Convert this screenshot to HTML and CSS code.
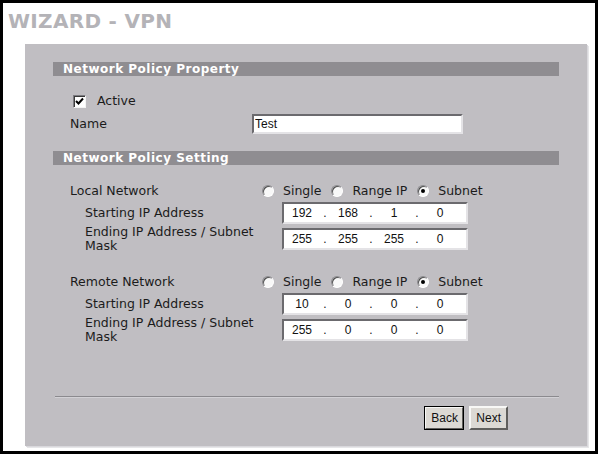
FILE: index.html
```html
<!DOCTYPE html>
<html>

<head>
    <meta charset="UTF-8">
    <title>Wizard - VPN</title>
    <link rel="stylesheet" href="styles.css">
</head>

<body>
    <div class="frame">
        <h1 class="title">WIZARD - VPN</h1>

        <section class="panel">
            <div class="bar">Network Policy Property</div>

            <div class="row active-row">
                <span class="check">
                    <svg width="9" height="9" viewBox="0 0 9 9"><path d="M1 4 L3.5 6.5 L8 1.5" fill="none" stroke="#000" stroke-width="2"/></svg>
                </span>
                <span class="label">Active</span>
            </div>

            <div class="row name-row">
                <span class="label name-label">Name</span>
                <input class="textbox name-box" type="text" value="Test">
            </div>

            <div class="bar bar-second">Network Policy Setting</div>

            <div class="row net-row">
                <span class="label net-label">Local Network</span>
                <span class="radio"></span><span class="label opt">Single</span>
                <span class="radio"></span><span class="label opt">Range IP</span>
                <span class="radio on"></span><span class="label opt">Subnet</span>
            </div>
            <div class="row ip-row">
                <span class="label ip-label">Starting IP Address</span>
                <div class="textbox ipbox">
                    <span class="oct">192</span><span class="dot">.</span><span class="oct">168</span><span class="dot">.</span><span class="oct">1</span><span class="dot">.</span><span class="oct">0</span>
                </div>
            </div>
            <div class="row ip-row">
                <span class="label ip-label">Ending IP Address / Subnet Mask</span>
                <div class="textbox ipbox">
                    <span class="oct">255</span><span class="dot">.</span><span class="oct">255</span><span class="dot">.</span><span class="oct">255</span><span class="dot">.</span><span class="oct">0</span>
                </div>
            </div>

            <div class="row net-row remote">
                <span class="label net-label">Remote Network</span>
                <span class="radio"></span><span class="label opt">Single</span>
                <span class="radio"></span><span class="label opt">Range IP</span>
                <span class="radio on"></span><span class="label opt">Subnet</span>
            </div>
            <div class="row ip-row">
                <span class="label ip-label">Starting IP Address</span>
                <div class="textbox ipbox">
                    <span class="oct">10</span><span class="dot">.</span><span class="oct">0</span><span class="dot">.</span><span class="oct">0</span><span class="dot">.</span><span class="oct">0</span>
                </div>
            </div>
            <div class="row ip-row">
                <span class="label ip-label">Ending IP Address / Subnet Mask</span>
                <div class="textbox ipbox">
                    <span class="oct">255</span><span class="dot">.</span><span class="oct">0</span><span class="dot">.</span><span class="oct">0</span><span class="dot">.</span><span class="oct">0</span>
                </div>
            </div>

            <div class="separator"></div>

            <div class="buttons">
                <button class="btn btn-default">Back</button>
                <button class="btn">Next</button>
            </div>
        </section>
    </div>
</body>

</html>
```

FILE: styles.css
```css
body {
    margin: 0;
    background-color: white;
    font-family: "DejaVu Sans", Verdana, sans-serif;
    color: #1b1b1b;
}

.frame {
    box-sizing: border-box;
    width: 598px;
    height: 454px;
    border: 3px solid #000;
    padding: 6px 0 0 5px;
}

.title {
    margin: 0;
    height: 24px;
    line-height: 24px;
    font-size: 20px;
    font-weight: bold;
    letter-spacing: 0.3px;
    color: #b4b3b7;
}

.panel {
    box-sizing: border-box;
    width: 562px;
    height: 402px;
    margin: 11px 0 0 17px;
    padding: 18px 28px 0 28px;
    background-color: #c0bec2;
    box-shadow: 1px 1px 0 #d9d8dc, 2px 2px 0 #e6e6e8;
}

/* section headers */
.bar {
    height: 14px;
    line-height: 14px;
    padding-left: 10px;
    background-color: #8f8d91;
    color: white;
    font-size: 12px;
    font-weight: bold;
    letter-spacing: 0.5px;
}

.bar-second {
    margin-top: 17px;
}

.row {
    display: flex;
    align-items: center;
    padding-left: 17px;
}

.label {
    font-size: 12.5px;
    line-height: 14px;
}

.active-row {
    height: 14px;
    margin-top: 18px;
    padding-left: 20px;
}

.check {
    box-sizing: border-box;
    width: 13px;
    height: 13px;
    margin-right: 11px;
    display: flex;
    align-items: center;
    justify-content: center;
    background-color: white;
    border: 1px solid;
    border-color: #7c7b80 #f4f4f4 #f4f4f4 #7c7b80;
    box-shadow: inset 1px 1px 0 #3a3a3a;
}

.name-row {
    height: 20px;
    margin-top: 6px;
}

.name-label {
    width: 182px;
}

.textbox {
    box-sizing: border-box;
    height: 20px;
    margin: 0;
    background-color: white;
    border: 2px solid;
    border-color: #6b6a6e #e4e3e6 #e4e3e6 #6b6a6e;
    font-family: "Liberation Sans", Arial, sans-serif;
    font-size: 12px;
    color: #111;
}

.name-box {
    width: 211px;
    padding: 0 1px;
    outline: none;
}

.net-row {
    height: 14px;
    margin-top: 19px;
}

.net-row.remote {
    margin-top: 25px;
}

.net-label {
    width: 192px;
}

.radio {
    position: relative;
    box-sizing: border-box;
    width: 12px;
    height: 12px;
    margin-right: 9px;
    border-radius: 50%;
    border: 1px solid;
    border-color: #8a898d #ffffff #ffffff #8a898d;
    background-color: #f8f8f8;
    box-shadow: inset 1px 1px 0 #505050;
}

.radio.on::after {
    content: "";
    position: absolute;
    left: 3px;
    top: 3px;
    width: 4px;
    height: 4px;
    border-radius: 50%;
    background-color: #000;
}

.opt {
    margin-right: 10px;
}

.ip-row {
    height: 22px;
    margin-top: 4px;
    padding-left: 32px;
}

.ip-row:nth-child(n) {
    align-items: center;
}

.ip-label {
    width: 178px;
    margin-right: 19px;
}

.ipbox {
    width: 186px;
    height: 22px;
    display: flex;
    align-items: center;
}

.oct {
    width: 36px;
    text-align: center;
}

.dot {
    width: 10px;
    text-align: center;
}

.separator {
    margin: 55px 0 0 2px;
    border-top: 1px solid #8b8a8e;
    border-bottom: 1px solid #d2d1d5;
}

.buttons {
    display: flex;
    justify-content: flex-end;
    gap: 5px;
    margin-top: 8px;
    padding-right: 51px;
}

.btn {
    box-sizing: border-box;
    height: 24px;
    padding: 0 5px;
    background-color: #dcd9d4;
    border: 2px solid;
    border-color: #f8f8f6 #5f5e5c #5f5e5c #f8f8f6;
    font-family: "Liberation Sans", Arial, sans-serif;
    font-size: 12px;
    color: #111;
}

.btn-default {
    width: 40px;
    outline: 1px solid #000;
    outline-offset: -1px;
}
```
